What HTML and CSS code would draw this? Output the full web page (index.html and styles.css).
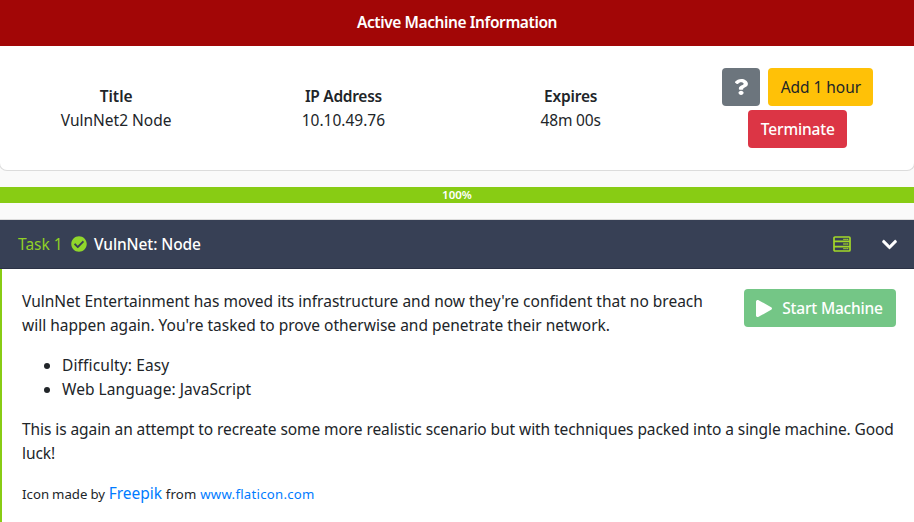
FILE: index.html
```
<!DOCTYPE html>
<html lang="en">
<head>
<meta charset="utf-8">
<title>VulnNet: Node</title>
<link rel="stylesheet" href="styles.css">
</head>
<body>
<section class="machine">
  <header class="machine-head">Active Machine Information</header>
  <div class="machine-body">
    <div class="info"><b>Title</b><span>VulnNet2 Node</span></div>
    <div class="info"><b class="ip-label">IP Address</b><span>10.10.49.76</span></div>
    <div class="info"><b class="expires-label">Expires</b><span class="time">48m 00s</span></div>
    <div class="actions">
      <button class="btn help" aria-label="Help"><svg width="13" height="16" viewBox="28 0 352 512" preserveAspectRatio="none"><path fill="currentColor" d="M202.021 0C122.202 0 70.503 32.703 29.914 91.026c-7.363 10.58-5.093 25.086 5.178 32.874l43.138 32.709c10.373 7.865 25.132 6.026 33.253-4.148 25.049-31.381 43.63-49.449 82.757-49.449 30.764 0 68.816 19.799 68.816 49.631 0 22.552-18.617 34.134-48.993 51.164-35.423 19.86-82.299 44.576-82.299 106.405V320c0 13.255 10.745 24 24 24h72.471c13.255 0 24-10.745 24-24v-5.773c0-42.86 125.268-44.645 125.268-160.627C377.504 66.256 286.902 0 202.021 0zM192 373.459c-38.196 0-69.271 31.075-69.271 69.271 0 38.195 31.075 69.27 69.271 69.27s69.271-31.075 69.271-69.271-31.075-69.27-69.271-69.27z"/></svg></button>
      <button class="btn extend">Add 1 hour</button>
      <button class="btn terminate">Terminate</button>
    </div>
  </div>
</section>
<div class="progress">100%</div>
<section class="task">
  <header class="task-head">
    <span class="task-no">Task 1</span>
    <svg class="check" width="16" height="16" viewBox="0 0 512 512"><path fill="currentColor" d="M504 256c0 136.967-111.033 248-248 248S8 392.967 8 256 119.033 8 256 8s248 111.033 248 248zM227.314 387.314l184-184c6.248-6.248 6.248-16.379 0-22.627l-22.627-22.627c-6.248-6.249-16.379-6.249-22.628 0L216 308.118l-70.059-70.059c-6.248-6.248-16.379-6.248-22.628 0l-22.627 22.627c-6.248 6.248-6.248 16.379 0 22.627l104 104c6.249 6.249 16.379 6.249 22.628.001z"/></svg>
    <span class="task-name">VulnNet: Node</span>
    <svg class="server" width="18" height="16" viewBox="0 0 18 16" fill="none" stroke="currentColor"><rect x="1" y="1" width="16" height="14" rx="1" stroke-width="1.7"/><path stroke-width="1.7" d="M1 5.4h16M1 10.6h16"/><path stroke-width="1.3" stroke-dasharray="1.5 .4" d="M10.3 3.4h5M10.3 8h5M10.3 12.7h5"/></svg>
    <svg class="chevron" width="15" height="17" viewBox="0 0 448 512"><path fill="currentColor" stroke="currentColor" stroke-width="14" d="M207.029 381.476L12.686 187.132c-9.373-9.373-9.373-24.569 0-33.941l22.667-22.667c9.357-9.357 24.522-9.375 33.901-.04L224 284.505l154.745-154.021c9.379-9.335 24.544-9.317 33.901.04l22.667 22.667c9.373 9.373 9.373 24.569 0 33.941L240.971 381.476c-9.373 9.372-24.569 9.372-33.942 0z"/></svg>
  </header>
  <div class="task-body">
    <button class="btn start"><svg width="16" height="17" viewBox="0 0 448 512" preserveAspectRatio="none"><path fill="currentColor" d="M424.4 214.7L72.4 6.6C43.8-10.3 0 6.1 0 47.9V464c0 37.5 40.7 60.1 72.4 41.3l352-208c31.4-18.5 31.5-64.1 0-82.6z"/></svg>Start Machine</button>
    <p>VulnNet Entertainment has moved its infrastructure and now they're confident that no breach<br>will happen again. You're tasked to prove otherwise and penetrate their network.</p>
    <ul>
      <li class="difficulty">Difficulty: Easy</li>
      <li class="language">Web Language: JavaScript</li>
    </ul>
    <p class="scenario">This is again an attempt to recreate some more realistic scenario but with techniques packed into a single machine. Good<br>luck!</p>
    <p class="credit"><small>Icon made by</small> <a>Freepik</a> <small class="wide">from</small> <a class="wide site">www.flaticon.com</a></p>
  </div>
</section>
</body>
</html>
```
FILE: styles.css
```
* { box-sizing: border-box; }
body {
  margin: 0;
  height: 522px;
  overflow: hidden;
  background: #fafafa;
  color: #212529;
  font: 15.5px/24px "Noto Sans", sans-serif;
  display: flex;
  flex-direction: column;
}
svg { display: block; flex: none; }

.machine {
  height: 171px;
  flex: none;
  margin: 0 -1px;
  background: #fff;
  border: 1px solid #dcdcdc;
  border-top: 0;
  border-radius: 0 0 8px 8px;
}
.machine-head {
  height: 46px;
  margin: 0 -1px;
  padding-top: 10px;
  background: #a20606;
  color: #fff;
  font-weight: 600;
  letter-spacing: -.41px;
  text-align: center;
}
.machine-body {
  height: 124px;
  padding: 0 2.5px;
  display: grid;
  grid-template-columns: repeat(4, 1fr);
  align-items: center;
}
.info {
  display: flex;
  flex-direction: column;
  align-items: center;
}
.info b { font-weight: 600; }
.ip-label { letter-spacing: -.3px; }
.expires-label { letter-spacing: -.2px; }
.time { letter-spacing: -.2px; }
.actions {
  display: flex;
  flex-wrap: wrap;
  justify-content: center;
  gap: 4px 8px;
}
.btn {
  height: 38px;
  border: 0;
  border-radius: 4px;
  padding: 0;
  display: flex;
  align-items: center;
  justify-content: center;
  color: #fff;
  font: inherit;
  font-weight: 500;
}
.help { width: 38px; background: #6c757d; }
.extend { width: 105px; background: #ffc107; color: #212529; font-weight: 400; letter-spacing: -.05px; }
.terminate { width: 99px; background: #dc3545; letter-spacing: -.15px; }

.progress {
  height: 16px;
  flex: none;
  margin: 16px 0;
  background: #88cc14;
  color: #fff;
  font-size: 11.5px;
  font-weight: 600;
  line-height: 16px;
  text-align: center;
}

.task { flex: 1; border-top: 1px solid #dcdcdc; }
.task-head {
  height: 49px;
  padding: 0 17px 0 18px;
  background: #374055;
  border-bottom: 1px solid #2b3245;
  color: #fff;
  display: flex;
  align-items: center;
}
.task-no { width: 52.5px; color: #90d026; }
.check { color: #90d62b; }
.task-name { margin-left: 7.5px; font-weight: 500; letter-spacing: -.1px; }
.server { margin-left: auto; margin-right: 31px; color: #a2d729; }
.task-body {
  height: 270px;
  padding: 20px 18px 0 20px;
  background: #fff;
  border-left: 2px solid #88cc14;
  white-space: nowrap;
}
.start {
  float: right;
  width: 152px;
  gap: 10px;
  padding-right: 1px;
  background: #74c686;
  letter-spacing: -.2px;
}
p { margin: 0 0 16px; }
ul { margin: 0 0 16px; padding-left: 40px; }
.difficulty { letter-spacing: .13px; }
.language { letter-spacing: .05px; }
.scenario { letter-spacing: -.08px; }
.credit { word-spacing: -.5px; }
.credit a { color: #007bff; }
.credit small, .credit .site { font-size: 13.2px; }
.credit small:first-child { letter-spacing: .04px; }
.credit .wide { letter-spacing: .26px; }
```
